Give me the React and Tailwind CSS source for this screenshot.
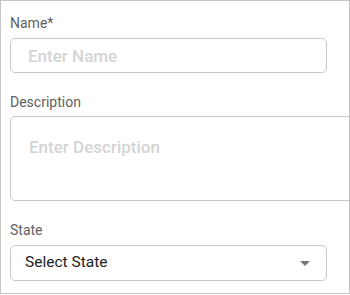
import React from 'react';

export default function App() {
  return (
    <div className="w-[350px] h-[294px] border border-[#c4c4c4] overflow-hidden bg-white px-[9px] pt-[12px] font-['Roboto',sans-serif]">
      {/* Name */}
      <label className="block text-[14px] leading-[20px] text-[#5f5f5f]">Name*</label>
      <input
        type="text"
        placeholder="Enter Name"
        className="mt-[5px] block w-[317px] h-[35px] rounded-[5px] border border-[#c8c8c8] pl-[17px] text-[17px] font-medium text-[#222] placeholder:text-[#d4d4d4] outline-none"
      />

      {/* Description */}
      <label className="block mt-[19px] text-[14px] leading-[20px] text-[#5f5f5f]">Description</label>
      <textarea
        placeholder="Enter Description"
        className="mt-[4px] block w-[360px] h-[85px] resize-none rounded-[5px] border border-[#c8c8c8] pl-[18px] pt-[18px] text-[17px] leading-[24px] font-medium text-[#222] placeholder:text-[#d4d4d4] outline-none"
      />

      {/* State */}
      <label className="block mt-[19px] text-[14px] leading-[20px] text-[#5f5f5f]">State</label>
      <div className="mt-[5px] flex items-center justify-between w-[317px] h-[36px] rounded-[5px] border border-[#c8c8c8] pl-[14px] pr-[16px]">
        <span className="text-[15.5px] text-[#222]">Select State</span>
        <svg width="10" height="5" viewBox="0 0 10 5">
          <path d="M0 0 L10 0 L5 5 Z" fill="#757575" />
        </svg>
      </div>
    </div>
  );
}
